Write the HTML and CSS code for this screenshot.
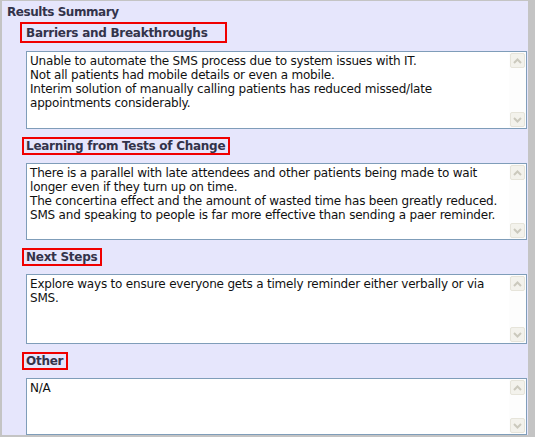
FILE: index.html
```html
<!doctype html>
<html lang="en">
  <head>
    <meta charset="UTF-8" />
    <meta name="viewport" content="width=device-width, initial-scale=1.0" />
    <title>Results Summary</title>
    <link rel="stylesheet" href="styles.css">
  </head>

  <body>
    <div class="panel">
      <h3 class="panel-title">Results Summary</h3>

      <section class="section">
        <h4 class="section-title first">Barriers and Breakthroughs</h4>
        <div class="field tall">
          <div class="field-text">
            Unable to automate the SMS process due to system issues with IT.<br />
            Not all patients had mobile details or even a mobile.<br />
            Interim solution of manually calling patients has reduced missed/late
            appointments considerably.
          </div>
          <div class="scrollbar">
            <span class="scroll-btn">
              <svg width="9" height="6" viewBox="0 0 9 6"><polyline points="1,5 4.5,1.5 8,5" /></svg>
            </span>
            <span class="scroll-btn">
              <svg width="9" height="6" viewBox="0 0 9 6"><polyline points="1,1 4.5,4.5 8,1" /></svg>
            </span>
          </div>
        </div>
      </section>

      <section class="section">
        <h4 class="section-title">Learning from Tests of Change</h4>
        <div class="field medium">
          <div class="field-text">
            There is a parallel with late attendees and other patients being made to wait
            longer even if they turn up on time.<br />
            The concertina effect and the amount of wasted time has been greatly reduced.<br />
            SMS and speaking to people is far more effective than sending a paer reminder.
          </div>
          <div class="scrollbar">
            <span class="scroll-btn">
              <svg width="9" height="6" viewBox="0 0 9 6"><polyline points="1,5 4.5,1.5 8,5" /></svg>
            </span>
            <span class="scroll-btn">
              <svg width="9" height="6" viewBox="0 0 9 6"><polyline points="1,1 4.5,4.5 8,1" /></svg>
            </span>
          </div>
        </div>
      </section>

      <section class="section">
        <h4 class="section-title">Next Steps</h4>
        <div class="field short">
          <div class="field-text">
            Explore ways to ensure everyone gets a timely reminder either verbally or via
            SMS.
          </div>
          <div class="scrollbar">
            <span class="scroll-btn">
              <svg width="9" height="6" viewBox="0 0 9 6"><polyline points="1,5 4.5,1.5 8,5" /></svg>
            </span>
            <span class="scroll-btn">
              <svg width="9" height="6" viewBox="0 0 9 6"><polyline points="1,1 4.5,4.5 8,1" /></svg>
            </span>
          </div>
        </div>
      </section>

      <section class="section">
        <h4 class="section-title">Other</h4>
        <div class="field last">
          <div class="field-text">N/A</div>
          <div class="scrollbar">
            <span class="scroll-btn">
              <svg width="9" height="6" viewBox="0 0 9 6"><polyline points="1,5 4.5,1.5 8,5" /></svg>
            </span>
            <span class="scroll-btn">
              <svg width="9" height="6" viewBox="0 0 9 6"><polyline points="1,1 4.5,4.5 8,1" /></svg>
            </span>
          </div>
        </div>
      </section>
    </div>
  </body>
</html>
```

FILE: styles.css
```css
body {
  margin: 0;
  font-family: "DejaVu Sans", Verdana, sans-serif;
}

.panel {
  box-sizing: border-box;
  width: 535px;
  height: 437px;
  overflow: hidden;
  background: #e6e6fc;
  border-style: solid;
  border-color: #c4c4c4;
  border-width: 1px 7px 2px 2px;
}

.panel-title {
  margin: 0;
  padding: 3px 0 0 5px;
  font-size: 12px;
  line-height: 16px;
  letter-spacing: -0.45px;
  color: #33334a;
}

.section {
  display: flex;
  flex-direction: column;
  align-items: flex-start;
  margin: 2px 1px 0 18px;

  & + .section {
    margin-top: 8px;
  }
}

.section-title {
  margin: 0 0 0 2px;
  padding: 0 3px 0 2px;
  font-size: 12px;
  line-height: 14px;
  letter-spacing: -0.27px;
  color: #33334a;
  border: 2px solid #f00000;

  &.first {
    margin-left: 0;
    padding: 2px 17px 1px 4px;
  }
}

.field {
  display: flex;
  align-self: stretch;
  box-sizing: border-box;
  margin: 8px 0 0 6px;
  overflow: hidden;
  background: #fff;
  border: 1px solid #7f9db9;

  &.tall {
    height: 78px;
  }

  &.medium {
    height: 77px;
  }

  &.short {
    height: 70px;
  }

  &.last {
    height: 57px;
  }
}

.field-text {
  flex: 1;
  padding: 2px 0 2px 3px;
  font-size: 12px;
  line-height: 14px;
  letter-spacing: -0.2px;
  color: #111;
}

.scrollbar {
  display: flex;
  flex-direction: column;
  justify-content: space-between;
  width: 15px;
  padding: 1px;
  background: #fdfdfd;
}

.scroll-btn {
  display: flex;
  align-items: center;
  justify-content: center;
  height: 15px;
  background: #f3f2ec;
  border: 1px solid #e6e4da;
  border-radius: 2px;
  box-sizing: border-box;

  & polyline {
    fill: none;
    stroke: #cbc9bd;
    stroke-width: 2;
  }
}
```
